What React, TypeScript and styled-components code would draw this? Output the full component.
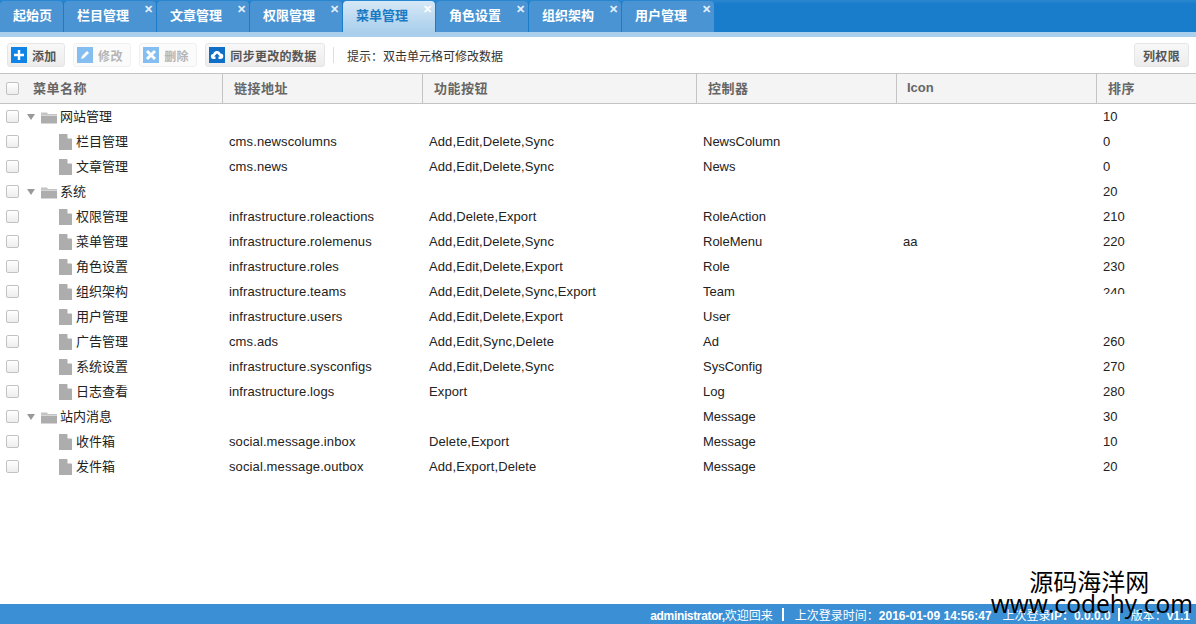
import { createGlobalStyle, styled } from "styled-components";

const GlobalStyle = createGlobalStyle`
  html, body, #root {
    margin: 0;
    height: 100%;
  }
  body {
    font-family: "Liberation Sans", "Noto Sans CJK SC", sans-serif;
    background: #fff;
    overflow: hidden;
  }
`;

const Page = styled.div`
  position: relative;
  display: flex;
  flex-direction: column;
  height: 624px;
`;

const TabBar = styled.div`
  display: flex;
  gap: 1px;
  height: 32px;
  padding-top: 1px;
  box-sizing: border-box;
  background: linear-gradient(#2a88d0, #1a7dcb 12%, #1a7dcb);
`;

const Tab = styled.div<{ $active?: boolean; $home?: boolean }>`
  position: relative;
  width: ${(p) => (p.$home ? "63px" : "92px")};
  padding-left: 13px;
  box-sizing: border-box;
  line-height: 30px;
  font-size: 13px;
  font-weight: 700;
  border-radius: 4px 4px 0 0;
  color: ${(p) => (p.$active ? "#1b79c4" : "#fff")};
  background: ${(p) => (p.$active ? "linear-gradient(#d6e8f6, #a9cfec)" : "#4a94d3")};
`;

const TabClose = styled.span<{ $active?: boolean }>`
  position: absolute;
  top: 3px;
  right: 3px;
  font-size: 11px;
  line-height: 11px;
  font-weight: 700;
  color: ${(p) => (p.$active ? "#fff" : "#e4f0fa")};
`;

const Strip = styled.div`
  height: 5px;
  background: #a9cfec;
`;

const Toolbar = styled.div`
  display: flex;
  align-items: center;
  gap: 8px;
  height: 37px;
  padding: 0 7px;
  box-sizing: border-box;
  border-bottom: 1px solid #c4c4c4;
`;

const ToolButton = styled.div<{ $disabled?: boolean }>`
  display: flex;
  align-items: center;
  gap: 5px;
  height: 24px;
  padding: 0 7.5px 0 3px;
  box-sizing: border-box;
  border: 1px solid #e6e6e6;
  border-radius: 3px;
  background: linear-gradient(#f8f8f8, #ececec);
  font-size: 12px;
  font-weight: 700;
  letter-spacing: 0.3px;
  color: ${(p) => (p.$disabled ? "#b5b5b5" : "#555")};
  ${(p) => p.$disabled && "background: #fbfbfb; border-color: #f0f0f0;"}
`;

const ToolIcon = styled.svg<{ $disabled?: boolean }>`
  width: 16px;
  height: 16px;
  flex: none;
  opacity: ${(p) => (p.$disabled ? 0.5 : 1)};
`;

const ToolDivider = styled.div`
  width: 1px;
  height: 16px;
  background: #ddd;
`;

const Hint = styled.span`
  margin-left: 5px;
  font-size: 12px;
  color: #333;
`;

const RightButton = styled(ToolButton)`
  margin-left: auto;
  padding: 0 8px;
  width: 55px;
  justify-content: center;
`;

const gridColumns = "26px 196px 200px 274px 200px 200px 1fr";

const HeaderRow = styled.div`
  display: grid;
  grid-template-columns: ${gridColumns};
  height: 31px;
  margin-top: -1px;
  box-sizing: border-box;
  background: #f4f4f4;
  border-top: 1px solid #c4c4c4;
  border-bottom: 1px solid #c4c4c4;
`;

const HeaderCell = styled.div<{ $plain?: boolean; $latin?: boolean }>`
  display: flex;
  align-items: center;
  padding: 0 0 2px ${(p) => (p.$plain ? "7px" : p.$latin ? "10px" : "11px")};
  border-left: ${(p) => (p.$plain ? "0" : "1px solid #c4c4c4")};
  font-size: 13px;
  font-weight: 700;
  letter-spacing: ${(p) => (p.$latin ? "0" : "0.5px")};
  color: #666;
`;

const Body = styled.div`
  flex: 1;
`;

const Row = styled.div`
  display: grid;
  grid-template-columns: ${gridColumns};
  height: 25px;
  color: #222;
`;

const Cell = styled.div`
  display: flex;
  align-items: center;
  padding-left: 7px;
  white-space: nowrap;
  font-size: 13px;
`;

const SpacedCell = styled(Cell)`
  letter-spacing: 0.11px;
`;

const CheckCell = styled.div`
  display: flex;
  align-items: center;
  padding-left: 6px;
`;

const Check = styled.span`
  width: 11px;
  height: 11px;
  border: 1px solid #c2c2c2;
  border-radius: 2px;
  background: linear-gradient(#fff, #ededed);
`;

const NameCell = styled.div<{ $leaf?: boolean }>`
  display: flex;
  align-items: center;
  padding-left: ${(p) => (p.$leaf ? "33px" : "1px")};
  font-size: 13px;
`;

const NameText = styled.span<{ $leaf?: boolean }>`
  margin-bottom: 2px;
  margin-left: ${(p) => (p.$leaf ? "1px" : "0")};
`;

const Arrow = styled.span`
  width: 0;
  height: 0;
  margin-right: 6px;
  border: 4px solid transparent;
  border-top: 6px solid #999;
  border-bottom: 0;
`;

const NodeIcon = styled.svg<{ $w: number }>`
  width: ${(p) => p.$w}px;
  height: 16px;
  flex: none;
  margin-right: 3px;
`;

const ClippedNumber = styled.span`
  display: block;
  height: 9px;
  line-height: 15px;
  margin-top: -4px;
  overflow: hidden;
`;

const Footer = styled.div`
  display: flex;
  justify-content: flex-end;
  align-items: center;
  height: 20px;
  padding-right: 6px;
  background: #3a8fd5;
  color: #fff;
  font-size: 12px;
  font-weight: 700;
  white-space: nowrap;
`;

const FooterUser = styled.span`
  letter-spacing: -0.35px;
`;

const FooterItem = styled.span`
  margin-left: 11px;
`;

const FooterThin = styled.span`
  font-weight: 400;
  letter-spacing: 0;
`;

const FooterBar = styled.span<{ $tight?: boolean }>`
  width: 2px;
  height: 13px;
  margin-left: ${(p) => (p.$tight ? "7px" : "9px")};
  background: #fff;
`;

const Watermark = styled.div`
  position: absolute;
  right: 3px;
  bottom: 13px;
  text-align: center;
  color: #000;
  pointer-events: none;
`;

const WatermarkCn = styled.div`
  padding-right: 5px;
  font-size: 24px;
  line-height: 27px;
`;

const WatermarkUrl = styled.div`
  font-family: "Open Sans", "Liberation Sans", sans-serif;
  font-size: 24.6px;
  line-height: 15px;
`;

const tabs = ["栏目管理", "文章管理", "权限管理", "菜单管理", "角色设置", "组织架构", "用户管理"];

type MenuRow = {
  name: string;
  folder?: boolean;
  link?: string;
  actions?: string;
  controller?: string;
  icon?: string;
  sort?: string;
};

const rows: MenuRow[] = [
  { name: "网站管理", folder: true, sort: "10" },
  { name: "栏目管理", link: "cms.newscolumns", actions: "Add,Edit,Delete,Sync", controller: "NewsColumn", sort: "0" },
  { name: "文章管理", link: "cms.news", actions: "Add,Edit,Delete,Sync", controller: "News", sort: "0" },
  { name: "系统", folder: true, sort: "20" },
  { name: "权限管理", link: "infrastructure.roleactions", actions: "Add,Delete,Export", controller: "RoleAction", sort: "210" },
  { name: "菜单管理", link: "infrastructure.rolemenus", actions: "Add,Edit,Delete,Sync", controller: "RoleMenu", icon: "aa", sort: "220" },
  { name: "角色设置", link: "infrastructure.roles", actions: "Add,Edit,Delete,Export", controller: "Role", sort: "230" },
  { name: "组织架构", link: "infrastructure.teams", actions: "Add,Edit,Delete,Sync,Export", controller: "Team", sort: "clip" },
  { name: "用户管理", link: "infrastructure.users", actions: "Add,Edit,Delete,Export", controller: "User" },
  { name: "广告管理", link: "cms.ads", actions: "Add,Edit,Sync,Delete", controller: "Ad", sort: "260" },
  { name: "系统设置", link: "infrastructure.sysconfigs", actions: "Add,Edit,Delete,Sync", controller: "SysConfig", sort: "270" },
  { name: "日志查看", link: "infrastructure.logs", actions: "Export", controller: "Log", sort: "280" },
  { name: "站内消息", folder: true, controller: "Message", sort: "30" },
  { name: "收件箱", link: "social.message.inbox", actions: "Delete,Export", controller: "Message", sort: "10" },
  { name: "发件箱", link: "social.message.outbox", actions: "Add,Export,Delete", controller: "Message", sort: "20" },
];

function FolderIcon() {
  return (
    <NodeIcon $w={16} viewBox="0 0 16 16">
      <path d="M0 3.500h6l1 1.500h9v1H0z" fill="#c4c4c4" />
      <path d="M0 6.500h16v8H0z" fill="#adadad" />
    </NodeIcon>
  );
}

function FileIcon() {
  return (
    <NodeIcon $w={13} viewBox="0 0 13 16">
      <path d="M0 0h8l5 5v11H0z" fill="#adadad" />
      <path d="M8.500 0v4.500H13z" fill="#fff" />
    </NodeIcon>
  );
}

function App() {
  return (
    <Page>
      <GlobalStyle />
      <TabBar>
        <Tab $home>起始页</Tab>
        {tabs.map((t) => (
          <Tab key={t} $active={t === "菜单管理"}>
            {t}
            <TabClose $active={t === "菜单管理"}>✕</TabClose>
          </Tab>
        ))}
      </TabBar>
      <Strip />
      <Toolbar>
        <ToolButton>
          <ToolIcon viewBox="0 0 16 16">
            <rect width="16" height="16" fill="#0f83e6" />
            <path d="M8 3v10M3 8h10" stroke="#fff" strokeWidth="2.400" />
          </ToolIcon>
          添加
        </ToolButton>
        <ToolButton $disabled>
          <ToolIcon $disabled viewBox="0 0 16 16">
            <rect width="16" height="16" fill="#0f83e6" />
            <path d="M4 12l1-3 5-5 2 2-5 5z" fill="#fff" />
          </ToolIcon>
          修改
        </ToolButton>
        <ToolButton $disabled>
          <ToolIcon $disabled viewBox="0 0 16 16">
            <rect width="16" height="16" fill="#0f83e6" />
            <path d="M4 4l8 8M12 4l-8 8" stroke="#fff" strokeWidth="3" />
          </ToolIcon>
          删除
        </ToolButton>
        <ToolButton>
          <ToolIcon viewBox="0 0 16 16">
            <rect width="16" height="16" fill="#0f6fc6" />
            <path
              d="M4.500 12a2.500 2.500 0 0 1-.3-5 3.800 3.800 0 0 1 7.300-.6A2.800 2.800 0 0 1 11.500 12H9.500V9.500h1.500L8 6.500l-3 3h1.500V12z"
              fill="#fff"
            />
          </ToolIcon>
          同步更改的数据
        </ToolButton>
        <ToolDivider />
        <Hint>提示：双击单元格可修改数据</Hint>
        <RightButton>列权限</RightButton>
      </Toolbar>
      <HeaderRow>
        <CheckCell>
          <Check />
        </CheckCell>
        <HeaderCell $plain>菜单名称</HeaderCell>
        <HeaderCell>链接地址</HeaderCell>
        <HeaderCell>功能按钮</HeaderCell>
        <HeaderCell>控制器</HeaderCell>
        <HeaderCell $latin>Icon</HeaderCell>
        <HeaderCell>排序</HeaderCell>
      </HeaderRow>
      <Body>
        {rows.map((r) => (
          <Row key={r.name}>
            <CheckCell>
              <Check />
            </CheckCell>
            <NameCell $leaf={!r.folder}>
              {r.folder && <Arrow />}
              {r.folder ? <FolderIcon /> : <FileIcon />}
              <NameText $leaf={!r.folder}>{r.name}</NameText>
            </NameCell>
            <SpacedCell>{r.link}</SpacedCell>
            <SpacedCell>{r.actions}</SpacedCell>
            <Cell>{r.controller}</Cell>
            <Cell>{r.icon}</Cell>
            <Cell>{r.sort === "clip" ? <ClippedNumber>240</ClippedNumber> : r.sort}</Cell>
          </Row>
        ))}
      </Body>
      <Footer>
        <FooterUser>
          administrator,<FooterThin>欢迎回来</FooterThin>
        </FooterUser>
        <FooterBar />
        <FooterItem>
          <FooterThin>上次登录时间：</FooterThin>2016-01-09 14:56:47
        </FooterItem>
        <FooterItem>
          <FooterThin>上次登录</FooterThin>IP：0.0.0.0
        </FooterItem>
        <FooterBar $tight />
        <FooterItem>
          <FooterThin>版本：</FooterThin>v1.1
        </FooterItem>
      </Footer>
      <Watermark>
        <WatermarkCn>源码海洋网</WatermarkCn>
        <WatermarkUrl>www.codehy.com</WatermarkUrl>
      </Watermark>
    </Page>
  );
}

export default App;
